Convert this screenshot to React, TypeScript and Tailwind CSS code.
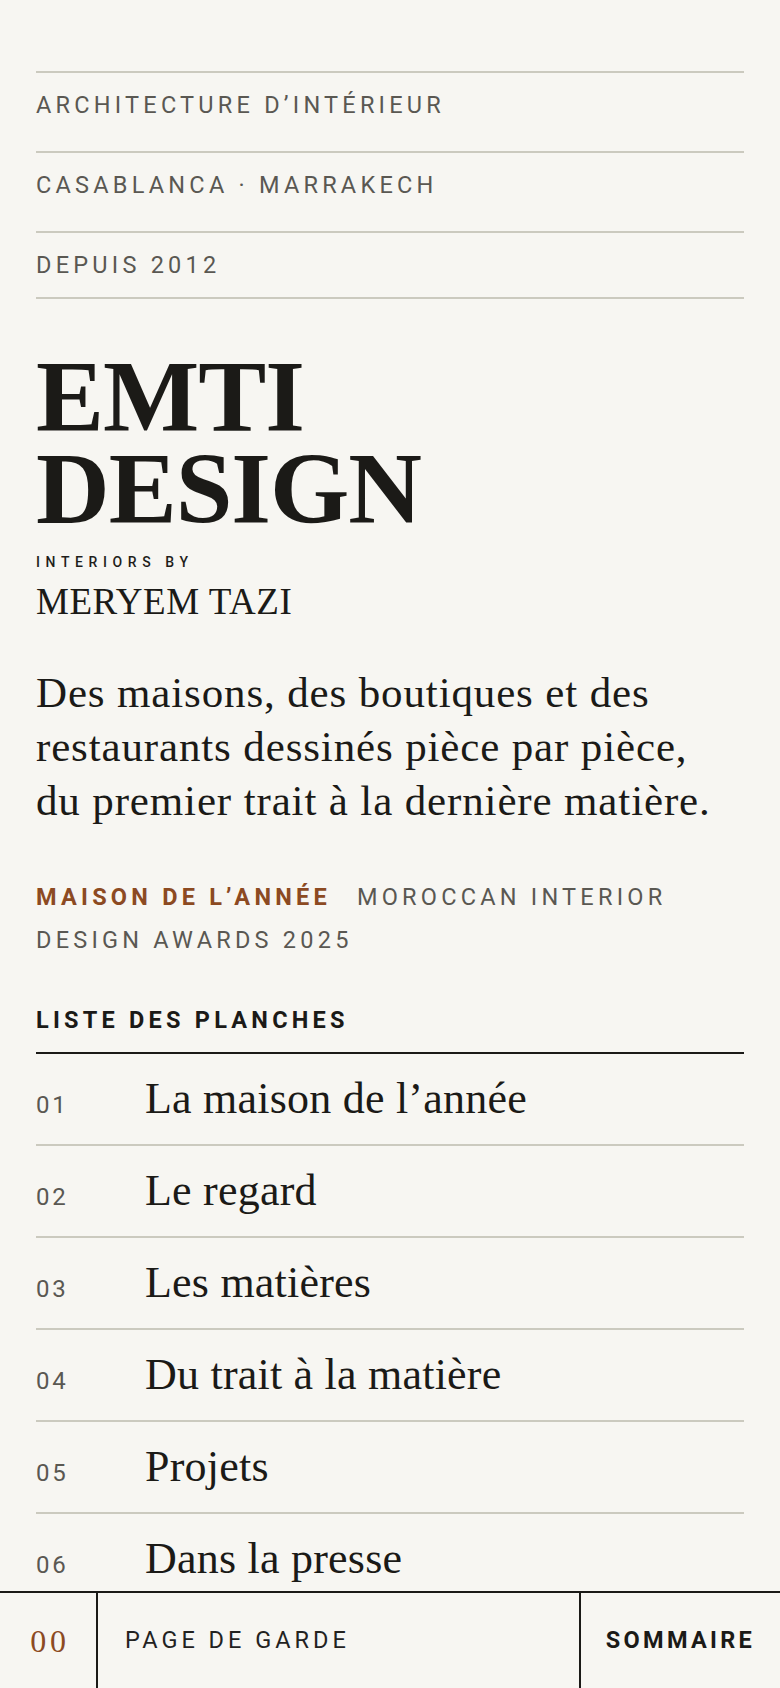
import React from "react";

const planches = [
  "La maison de l’année",
  "Le regard",
  "Les matières",
  "Du trait à la matière",
  "Projets",
  "Dans la presse",
];

const label =
  "font-['Roboto','Liberation_Sans',sans-serif] text-[23.5px] leading-[24px] tracking-[0.18em] text-[#5a5852]";

export default function App() {
  return (
    <div className="min-h-screen bg-[#f7f6f2] text-[#1b1a17]">
      <main className="px-9 pt-[71px] pb-[110px]">
        <ul className="border-b-2 border-[#cbcabf]">
          <li className={`h-[80px] border-t-2 border-[#cbcabf] pt-[20px] ${label}`}>
            ARCHITECTURE D’INTÉRIEUR
          </li>
          <li className={`h-[80px] border-t-2 border-[#cbcabf] pt-[20px] ${label}`}>
            CASABLANCA · MARRAKECH
          </li>
          <li className={`h-[66px] border-t-2 border-[#cbcabf] pt-[20px] ${label}`}>
            DEPUIS 2012
          </li>
        </ul>

        <h1 className="mt-[52px] font-['Liberation_Serif',serif] text-[102px] leading-[92px] font-bold tracking-[-0.01em] text-[#1b1a17]">
          EMTI
          <br />
          DESIGN
        </h1>

        <div className="mt-[19px] font-['Roboto','Liberation_Sans',sans-serif] text-[14px] leading-[16px] font-medium tracking-[0.4em] text-[#1f1e1b]">
          INTERIORS BY
        </div>
        <div className="mt-[12px] font-['Liberation_Serif',serif] text-[37px] leading-[40px] tracking-[0.015em] text-[#1b1a17]">
          MERYEM TAZI
        </div>

        <p className="mt-[44px] max-w-[690px] font-['Liberation_Serif',serif] text-[43px] leading-[54px] tracking-[0.02em] text-[#1b1a17]">
          Des maisons, des boutiques et des restaurants dessinés pièce par pièce, du premier trait à la dernière matière.
        </p>

        <p className="mt-[48px] font-['Roboto','Liberation_Sans',sans-serif] text-[23.5px] leading-[42.7px] tracking-[0.18em]">
          <span className="mr-[26px] font-bold text-[#8c4a22]">MAISON DE L’ANNÉE</span>
          <span className="text-[#5a5852]">MOROCCAN INTERIOR DESIGN AWARDS 2025</span>
        </p>

        <div className="mt-[47px] border-b-2 border-[#1b1a17] pb-[20px] font-['Roboto','Liberation_Sans',sans-serif] text-[23.5px] leading-[24px] font-bold tracking-[0.18em] text-[#1b1a17]">
          LISTE DES PLANCHES
        </div>

        <ol>
          {planches.map((t, i) => (
            <li
              key={t}
              className={
                i === 0
                  ? "flex h-[90px] items-baseline pt-[20px]"
                  : "flex h-[92px] items-baseline border-t-2 border-[#cbcabf] pt-[20px]"
              }
            >
              <span className="w-[109px] shrink-0 font-['Roboto','Liberation_Sans',sans-serif] text-[24px] leading-[24px] tracking-[0.12em] text-[#5a5852]">
                {String(i + 1).padStart(2, "0")}
              </span>
              <span className="font-['Liberation_Serif',serif] text-[44px] leading-[50px] tracking-[0.005em] text-[#1b1a17]">
                {t}
              </span>
            </li>
          ))}
        </ol>
      </main>

      <nav className="fixed inset-x-0 bottom-0 flex h-[97px] border-t-2 border-[#1b1a17] bg-[#f7f6f2]">
        <div className="flex w-[98px] shrink-0 items-center justify-center border-r-2 border-[#1b1a17]">
          <span className="pl-[4px] font-['Liberation_Serif',serif] text-[32px] leading-none tracking-[0.12em] text-[#8c4a22]">
            00
          </span>
        </div>
        <div className="flex flex-1 items-center pl-[27px] font-['Roboto','Liberation_Sans',sans-serif] text-[23.5px] tracking-[0.17em] text-[#23221f]">
          PAGE DE GARDE
        </div>
        <div className="flex w-[201px] shrink-0 items-center justify-center border-l-2 border-[#1b1a17] font-['Roboto','Liberation_Sans',sans-serif] text-[23.5px] font-bold tracking-[0.14em] text-[#1b1a17]">
          SOMMAIRE
        </div>
      </nav>
    </div>
  );
}
